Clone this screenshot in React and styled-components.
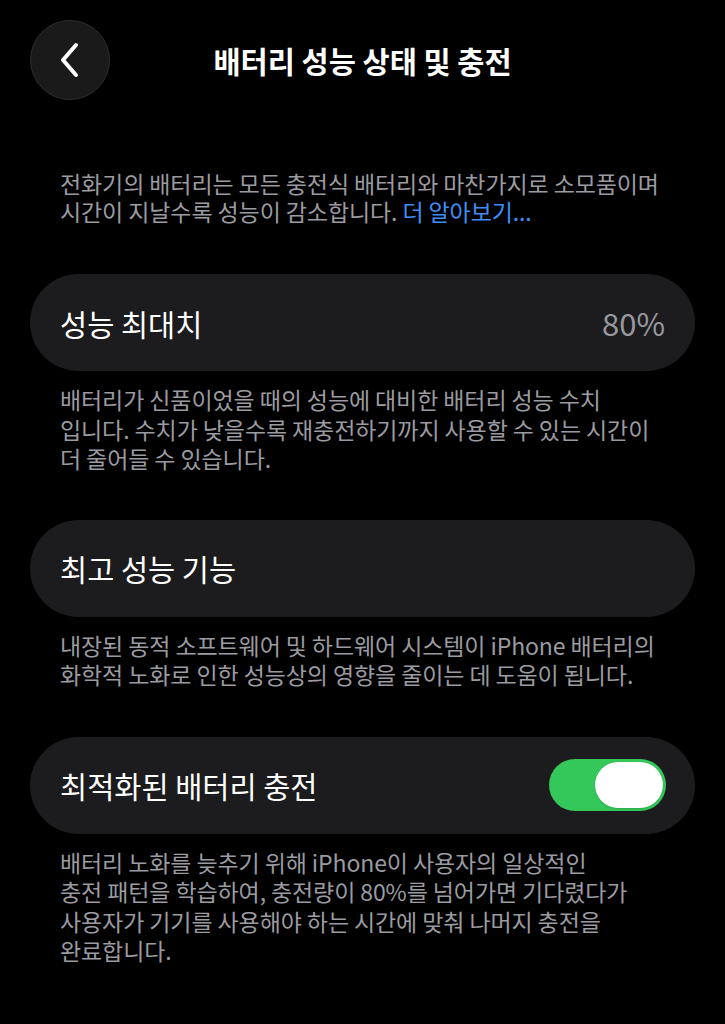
import React from 'react';
import styled, { createGlobalStyle } from 'styled-components';

const GlobalStyle = createGlobalStyle`
  html, body {
    margin: 0;
    padding: 0;
    background: #000;
  }
  body {
    font-family: "Noto Sans CJK KR", "Noto Sans", sans-serif;
    -webkit-font-smoothing: antialiased;
  }
`

const Page = styled.div`
  width: 725px;
  min-height: 1024px;
  box-sizing: border-box;
  padding: 20px 30px 0;
  background: #000;
  color: #fff;
`

const Header = styled.header`
  display: grid;
  grid-template-columns: 80px 1fr 80px;
  align-items: center;
  height: 80px;
`

const BackButton = styled.button`
  width: 80px;
  height: 80px;
  border-radius: 50%;
  border: 1px solid #2e2e30;
  background: #1a1a1b;
  display: flex;
  align-items: center;
  justify-content: center;
  padding: 0;
  cursor: pointer;
`

const Title = styled.h1`
  margin: 0;
  text-align: center;
  font-size: 29.5px;
  font-weight: 600;
  color: #fff;
`

const Intro = styled.p`
  margin: 69px 0 0;
  padding: 0 30px;
  font-size: 23px;
  line-height: 28px;
  color: #9b9ba0;
  letter-spacing: -0.1px;
  white-space: nowrap;
`

const LearnMore = styled.a`
  color: #3d8ff5;
  text-decoration: none;
`

const Card = styled.div`
  margin-top: ${props => props.$top}px;
  height: 97px;
  border-radius: 48.5px;
  background: #1c1c1e;
  display: flex;
  align-items: center;
  justify-content: space-between;
  padding: 0 29px 0 30px;
  box-sizing: border-box;
`

const Label = styled.span`
  font-size: 29.5px;
  font-weight: 400;
  color: #fff;
`

const Value = styled.span`
  font-size: 31px;
  color: #98989e;
  padding-right: 1px;
`

const Footnote = styled.p`
  margin: 14px 0 0;
  padding: 0 30px;
  font-size: 23px;
  line-height: 29.5px;
  color: #9b9ba0;
  letter-spacing: -0.1px;
  white-space: nowrap;
`

const Toggle = styled.div`
  width: 117px;
  height: 52px;
  border-radius: 26px;
  background: ${props => (props.$on ? '#34c759' : '#39393d')};
  display: flex;
  align-items: center;
  justify-content: ${props => (props.$on ? 'flex-end' : 'flex-start')};
  padding: 0 3px;
  box-sizing: border-box;
`

const Knob = styled.div`
  width: 68px;
  height: 46px;
  border-radius: 23px;
  background: #fff;
  box-shadow: 0 1px 2px rgba(0, 0, 0, 0.15);
`

const ChevronLeft = () => (
  <svg width="28" height="36" viewBox="0 0 28 36" fill="none">
    <path d="M20 3 L7 18 L20 33" stroke="#fff" strokeWidth="4" strokeLinecap="round" strokeLinejoin="round" />
  </svg>
)

const App = () => {
  return (
    <Page>
      <GlobalStyle />
      <Header>
        <BackButton aria-label="뒤로">
          <ChevronLeft />
        </BackButton>
        <Title>배터리 성능 상태 및 충전</Title>
        <div />
      </Header>

      <Intro>
        전화기의 배터리는 모든 충전식 배터리와 마찬가지로 소모품이며<br />
        시간이 지날수록 성능이 감소합니다. <LearnMore>더 알아보기...</LearnMore>
      </Intro>

      <Card $top={49}>
        <Label>성능 최대치</Label>
        <Value>80%</Value>
      </Card>
      <Footnote>
        배터리가 신품이었을 때의 성능에 대비한 배터리 성능 수치<br />
        입니다. 수치가 낮을수록 재충전하기까지 사용할 수 있는 시간이<br />
        더 줄어들 수 있습니다.
      </Footnote>

      <Card $top={46}>
        <Label>최고 성능 기능</Label>
      </Card>
      <Footnote>
        내장된 동적 소프트웨어 및 하드웨어 시스템이 iPhone 배터리의<br />
        화학적 노화로 인한 성능상의 영향을 줄이는 데 도움이 됩니다.
      </Footnote>

      <Card $top={47}>
        <Label>최적화된 배터리 충전</Label>
        <Toggle $on>
          <Knob />
        </Toggle>
      </Card>
      <Footnote>
        배터리 노화를 늦추기 위해 iPhone이 사용자의 일상적인<br />
        충전 패턴을 학습하여, 충전량이 80%를 넘어가면 기다렸다가<br />
        사용자가 기기를 사용해야 하는 시간에 맞춰 나머지 충전을<br />
        완료합니다.
      </Footnote>
    </Page>
  );
};

export default App;
